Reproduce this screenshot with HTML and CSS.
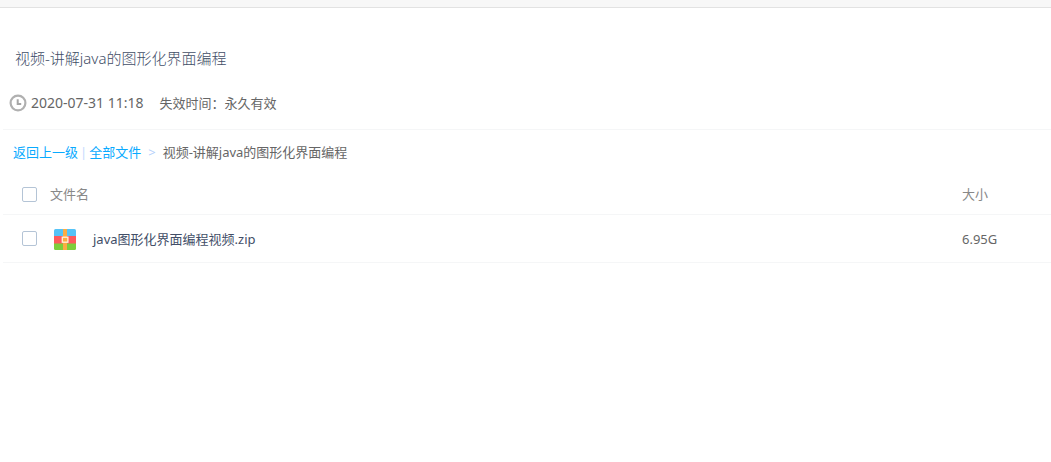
FILE: index.html
```html
<!DOCTYPE html>
<html lang="zh-CN">
<head>
  <meta charset="UTF-8">
  <meta name="viewport" content="width=device-width, initial-scale=1.0">
  <title>视频-讲解java的图形化界面编程</title>
  <link rel="stylesheet" href="styles.css">
</head>
<body>
  <div class="top-strip"></div>
  <main class="share">
    <header class="share-header">
      <h1 class="share-title">视频-讲解java的图形化界面编程</h1>
      <div class="share-info">
        <svg class="clock" viewBox="0 0 18 18" aria-hidden="true">
          <circle cx="9" cy="9" r="7.4" fill="none" stroke="#b0b0b0" stroke-width="2.2"/>
          <path d="M8.7 5.2V10H12.2" fill="none" stroke="#a6a6a6" stroke-width="2"/>
        </svg>
        <time class="share-time" datetime="2020-07-31T11:18">2020-07-31 11:18</time>
        <span class="share-expire">失效时间：永久有效</span>
      </div>
    </header>
    <nav class="crumbs">
      <a href="#">返回上一级</a>
      <span class="crumb-sep">|</span>
      <a href="#">全部文件</a>
      <span class="crumb-arrow">&gt;</span>
      <span>视频-讲解java的图形化界面编程</span>
    </nav>
    <table class="files">
      <thead>
        <tr>
          <th class="col-check"><input type="checkbox" class="check" aria-label="全选"></th>
          <th class="col-name">文件名</th>
          <th class="col-size">大小</th>
        </tr>
      </thead>
      <tbody>
        <tr>
          <td class="col-check"><input type="checkbox" class="check" id="file-1"></td>
          <td class="col-name">
            <label class="file" for="file-1">
              <svg class="zip" viewBox="0 0 24 24" aria-hidden="true">
                <clipPath id="zip-shape"><rect x="1" y="2" width="22" height="21" rx="1.5"/></clipPath>
                <g clip-path="url(#zip-shape)">
                  <rect x="1" y="1" width="22" height="8" fill="#55c3f7"/>
                  <rect x="1" y="9" width="22" height="8" fill="#ff5a5c"/>
                  <rect x="1" y="16.5" width="22" height="7" fill="#7ece3b"/>
                  <rect x="10" y="1" width="4" height="22" fill="#fbac43"/>
                </g>
                <rect x="9.3" y="10.2" width="5.6" height="5" fill="#fbac43" stroke="#fff1da" stroke-width="1.3"/>
              </svg>
              <span>java图形化界面编程视频.zip</span>
            </label>
          </td>
          <td class="col-size">6.95G</td>
        </tr>
      </tbody>
    </table>
  </main>
</body>
</html>
```

FILE: styles.css
```css
body {
  margin: 0;
  background: #ffffff;
  color: #666666;
  font-family: "Noto Sans", "Noto Sans CJK SC", sans-serif;
  font-size: 13px;
  line-height: 20px;
}
.top-strip {
  height: 7px;
  background: #f7f7f7;
  border-bottom: 1px solid #e2e2e2;
}
.share {
  padding-left: 3px;
}

/* Title and share time */
.share-header {
  padding: 39px 0 16px 6px;
  border-bottom: 1px solid #f5f6f7;
}
.share-title {
  margin: 0 0 24px 6px;
  color: #424e67;
  font-size: 15px;
  font-weight: 300;
  line-height: 22px;
}
.share-info {
  display: flex;
  align-items: center;
}
.clock {
  width: 18px;
  height: 18px;
  margin-right: 4px;
}
.share-time {
  margin-right: 16px;
  font-size: 14px;
}

/* Breadcrumb */
.crumbs {
  display: flex;
  padding: 12px 10px;
}
.crumbs a {
  color: #09aaff;
  text-decoration: none;
}
.crumb-sep {
  margin: 0 2px;
  color: #c4dbfe;
}
.crumb-arrow {
  margin: 0 7px;
  color: #b4d0fb;
}

/* File list */
.files {
  width: 100%;
  border-collapse: collapse;
  table-layout: fixed;
}
.files th,
.files td {
  padding: 0;
  border-bottom: 1px solid #f5f6f7;
  text-align: left;
}
.files th {
  height: 40px;
  color: #888888;
  font-weight: 400;
}
.files td {
  height: 47px;
}
.files .col-check {
  width: 28px;
  padding-left: 19px;
}
.files .col-size {
  width: 89px;
}
.check {
  appearance: none;
  display: block;
  width: 15px;
  height: 15px;
  margin: 0;
  border: 1px solid #b4c4d6;
  border-radius: 2px;
  background: #ffffff;
}
.check:checked {
  background: #09aaff;
}
.file {
  display: flex;
  align-items: center;
  color: #424e67;
}
.zip {
  width: 24px;
  height: 24px;
  margin: 0 16px 0 3px;
}
```
